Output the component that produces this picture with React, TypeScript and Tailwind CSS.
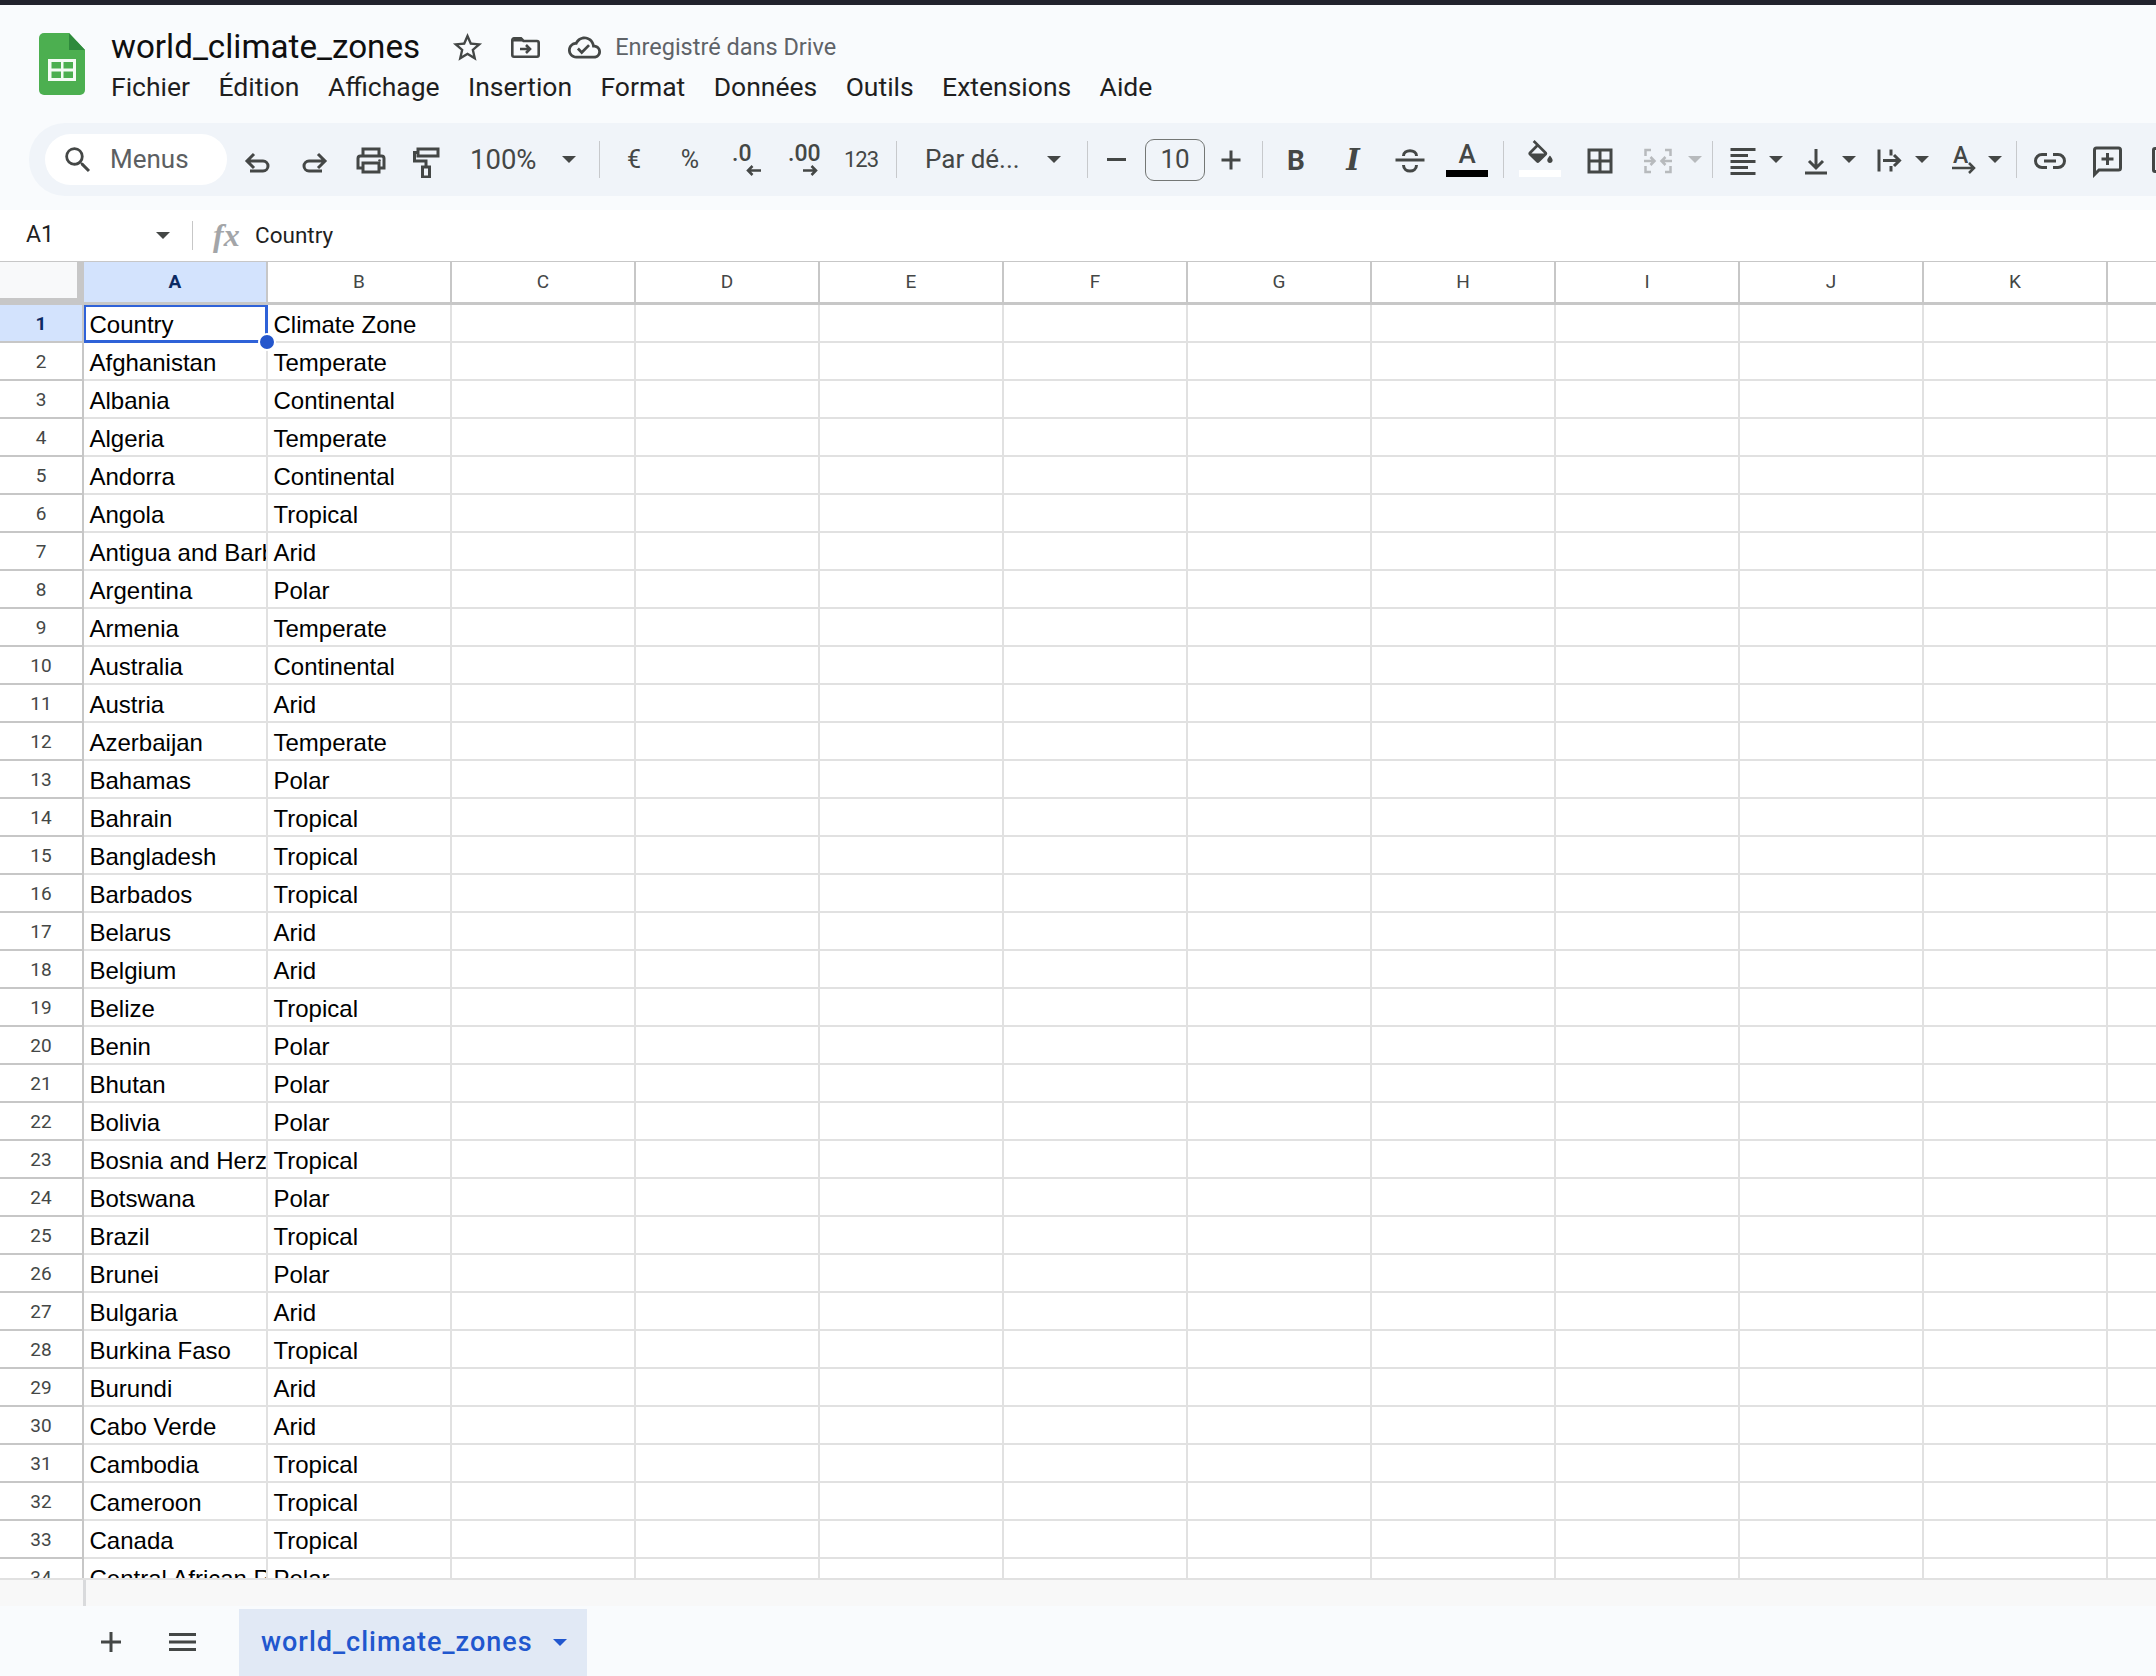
import type { ReactNode } from "react";

const MENU = ["Fichier", "Édition", "Affichage", "Insertion", "Format", "Données", "Outils", "Extensions", "Aide"];
const COLUMNS = ["A", "B", "C", "D", "E", "F", "G", "H", "I", "J", "K", ""];

const ROWS: [string, string][] = [
  ["Country", "Climate Zone"],
  ["Afghanistan", "Temperate"],
  ["Albania", "Continental"],
  ["Algeria", "Temperate"],
  ["Andorra", "Continental"],
  ["Angola", "Tropical"],
  ["Antigua and Barbuda", "Arid"],
  ["Argentina", "Polar"],
  ["Armenia", "Temperate"],
  ["Australia", "Continental"],
  ["Austria", "Arid"],
  ["Azerbaijan", "Temperate"],
  ["Bahamas", "Polar"],
  ["Bahrain", "Tropical"],
  ["Bangladesh", "Tropical"],
  ["Barbados", "Tropical"],
  ["Belarus", "Arid"],
  ["Belgium", "Arid"],
  ["Belize", "Tropical"],
  ["Benin", "Polar"],
  ["Bhutan", "Polar"],
  ["Bolivia", "Polar"],
  ["Bosnia and Herzegovina", "Tropical"],
  ["Botswana", "Polar"],
  ["Brazil", "Tropical"],
  ["Brunei", "Polar"],
  ["Bulgaria", "Arid"],
  ["Burkina Faso", "Tropical"],
  ["Burundi", "Arid"],
  ["Cabo Verde", "Arid"],
  ["Cambodia", "Tropical"],
  ["Cameroon", "Tropical"],
  ["Canada", "Tropical"],
  ["Central African Republic", "Polar"],
];

// 36x36 box drawn in screen pixels, so the strokes line up with the toolbar
function Stroke({ children, color = "#444746", width = 3 }: { children: ReactNode; color?: string; width?: number }) {
  return (
    <svg viewBox="0 0 36 36" className="h-9 w-9 shrink-0" fill="none" stroke={color} strokeWidth={width}>
      {children}
    </svg>
  );
}

function Caret({ color = "#444746" }: { color?: string }) {
  return (
    <svg viewBox="0 0 14 7" className="h-[7px] w-[14px] shrink-0">
      <path d="M0 0h14L7 7z" fill={color} />
    </svg>
  );
}

function Sep({ className = "mx-[6px]" }: { className?: string }) {
  return <div className={`h-[37px] w-px shrink-0 bg-[#c7c9cc] ${className}`} />;
}

function Tool({ className, children }: { className: string; children: ReactNode }) {
  return <div className={`flex h-[50px] shrink-0 items-center justify-center ${className}`}>{children}</div>;
}

function Logo() {
  return (
    <svg viewBox="0 0 46 62" className="h-[62px] w-[46px] shrink-0">
      <path d="M5 0h25l16 17v40a5 5 0 0 1-5 5H5a5 5 0 0 1-5-5V5a5 5 0 0 1 5-5z" fill="#4caf50" />
      <path d="M30 0l16 17H30z" fill="#2f8a3c" />
      <path d="M9 26h28v22H9z" fill="#f4fbf4" />
      <path d="M12.5 29h9.5v6.5h-9.5zM24.5 29h9.5v6.5h-9.5zM12.5 38.500h9.500v6.500h-9.500zM24.500 38.500h9.500v6.500h-9.500z" fill="#4caf50" />
    </svg>
  );
}

function Toolbar() {
  return (
    <div className="ml-[29px] mt-[18px] flex h-[73px] items-center overflow-hidden rounded-l-[36px] bg-[#f0f4f9] pl-4 text-[#444746]">
      <div className="flex h-[51px] w-[182px] shrink-0 items-center rounded-full bg-white pl-4">
        <svg viewBox="0 0 24 24" className="h-[34px] w-[34px] shrink-0" fill="#444746">
          <path d="M15.5 14h-.79l-.28-.27A6.471 6.471 0 0 0 16 9.500 6.500 6.500 0 1 0 9.500 16c1.610 0 3.090-.590 4.230-1.570l.270.280v.790l5 4.990L20.490 19l-4.990-5zm-6 0C7.010 14 5 11.990 5 9.500S7.010 5 9.500 5 14 7.010 14 9.500 11.990 14 9.500 14z" />
        </svg>
        <span className="ml-[15px] text-[26px] text-[#5c5f62]">Menus</span>
      </div>

      <Tool className="ml-[3px] w-14">
        <Stroke><path d="M14 12l-7 7 7 7M7 19h16a5 5 0 0 1 0 10H10" /></Stroke>
      </Tool>
      <Tool className="w-14">
        <Stroke><path d="M22 12l7 7-7 7M29 19H13a5 5 0 0 0 0 10h13" /></Stroke>
      </Tool>
      <Tool className="w-14">
        <Stroke>
          <path d="M11 14V7h16v7M11 26H6V16.500a2.500 2.500 0 0 1 2.500-2.500h21a2.500 2.500 0 0 1 2.500 2.500V26h-5M11 21h16v9H11z" />
          <circle cx="27.500" cy="18.500" r="1.300" fill="#444746" stroke="none" />
        </Stroke>
      </Tool>
      <Tool className="w-14">
        <Stroke><path d="M10 7h20v7H10zM10 10.500H6.500V19H18v6M14.500 25h7v10h-7z" /></Stroke>
      </Tool>

      <div className="flex h-[50px] w-[139px] shrink-0 items-center justify-between pl-4 pr-[17px]">
        <span className="text-[27.500px]">100%</span>
        <Caret />
      </div>
      <Sep />

      <Tool className="w-14"><span className="text-[25px]">€</span></Tool>
      <Tool className="w-14"><span className="text-[25px]">%</span></Tool>
      <div className="flex h-[50px] w-[57px] shrink-0 flex-col justify-center pl-[14px]">
        <span className="text-[23px] font-medium leading-[20px]">.0</span>
        <svg viewBox="0 0 15 11" className="ml-[14px] mt-[1px] h-[11px] w-[15px]" fill="none" stroke="#444746" strokeWidth="2.500">
          <path d="M15 5.500H2M6.500 1L2 5.500 6.500 10" />
        </svg>
      </div>
      <div className="flex h-[50px] w-[57px] shrink-0 flex-col justify-center pl-[13px]">
        <span className="text-[23px] font-medium leading-[20px]">.00</span>
        <svg viewBox="0 0 15 11" className="ml-[15px] mt-[1px] h-[11px] w-[15px]" fill="none" stroke="#444746" strokeWidth="2.500">
          <path d="M0 5.500h13M8.500 1L13 5.500 8.500 10" />
        </svg>
      </div>
      <Tool className="w-[58px]"><span className="text-[22px] tracking-[-1px]">123</span></Tool>
      <Sep />

      <div className="flex h-[50px] w-[178px] shrink-0 items-center justify-between pl-[22px] pr-[20px]">
        <span className="text-[26px]">Par dé...</span>
        <Caret />
      </div>
      <Sep />

      <Tool className="w-11"><div className="h-[3px] w-[19px] bg-[#444746]" /></Tool>
      <div className="ml-[7px] flex h-[42px] w-[60px] shrink-0 items-center justify-center rounded-[9px] border-[1.5px] border-[#747775] text-[26px]">10</div>
      <Tool className="ml-px w-[50px]">
        <Stroke><path d="M18 8.500v19M8.500 18h19" /></Stroke>
      </Tool>
      <Sep />

      <Tool className="w-[54px] pt-[2px]"><span className="text-[28px] font-bold">B</span></Tool>
      <Tool className="w-[60px] pt-[2px]"><span className="font-['DejaVu_Serif',serif] text-[29px] font-bold italic">I</span></Tool>
      <Tool className="w-[53px]">
        <Stroke><path d="M3.500 18h29M11.500 14c0-7 13-7 13 0M11.500 23c0 8 13 8 13 0" /></Stroke>
      </Tool>
      <div className="mb-[2px] flex h-[37px] w-[62px] shrink-0 flex-col items-center justify-end">
        <span className="text-[26px] font-medium leading-[24px]">A</span>
        <div className="mt-[4px] h-[7px] w-[42px] bg-black" />
      </div>
      <Sep className="ml-[5px] mr-[6px]" />

      <div className="mb-[2px] flex h-[37px] w-[60px] shrink-0 flex-col items-center justify-end">
        <svg viewBox="0 0 24 20" className="h-[27px] w-[33px]" fill="#444746">
          <path d="M16.560 8.940L7.620 0 6.210 1.410l2.380 2.380-5.150 5.150c-.590.590-.590 1.540 0 2.120l5.500 5.500c.290.290.680.440 1.060.440s.770-.150 1.060-.440l5.500-5.500c.590-.580.590-1.530 0-2.120zM5.210 10L10 5.210 14.790 10H5.210zM19 11.500s-2 2.170-2 3.500c0 1.100.9 2 2 2s2-.9 2-2c0-1.330-2-3.500-2-3.500z" />
        </svg>
        <div className="mt-[3px] h-[7px] w-[42px] bg-white" />
      </div>
      <Tool className="w-[59px]">
        <Stroke><path d="M7 8h22v22H7zM18 8v22M7 19h22" /></Stroke>
      </Tool>
      <Tool className="w-[58px]">
        <Stroke color="#b7babd" width={2.500}>
          <path d="M11 8H5.500v6M25 8h5.500v6M11 30H5.500v-6M25 30h5.500v-6M4 19h10M10.500 15l4 4-4 4M32 19H22M25.500 15l-4 4 4 4" />
        </Stroke>
      </Tool>
      <Tool className="w-4"><Caret color="#b7babd" /></Tool>
      <Sep className="ml-[9px] mr-[6px]" />

      <Tool className="w-12">
        <Stroke><path d="M5.500 7.500h25M5.500 13.500H23M5.500 19.500h25M5.500 25.500H23M5.500 31.500h25" /></Stroke>
      </Tool>
      <Tool className="w-[18px]"><Caret /></Tool>
      <Tool className="w-14 pl-[6px]">
        <Stroke><path d="M18 7v19M11 19l7 7 7-7M7 31h22" /></Stroke>
      </Tool>
      <Tool className="w-4"><Caret /></Tool>
      <Tool className="w-[57px] pl-[7px]">
        <Stroke><path d="M8 7.500v22M20 7.500v6M20 24v5.500M12 18.500h16M23 13l5.500 5.500L23 24" /></Stroke>
      </Tool>
      <Tool className="w-4"><Caret /></Tool>
      <div className="flex h-[37px] w-[57px] shrink-0 flex-col items-start pl-[22px]">
        <span className="ml-[1px] mt-[5px] text-[23px] font-medium leading-[20px]">A</span>
        <svg viewBox="0 0 24 12" className="-mt-[4px] h-3 w-6" fill="none" stroke="#444746" strokeWidth="2.500">
          <path d="M0 6h22M17 1l5 5-5 5" />
        </svg>
      </div>
      <Tool className="w-4"><Caret /></Tool>
      <Sep className="ml-[13px] mr-[6px]" />

      <Tool className="w-[54px]">
        <Stroke><path d="M15 12.500H10a6.500 6.500 0 0 0 0 13h5M21 12.500h5a6.500 6.500 0 0 1 0 13h-5M12 19h12" /></Stroke>
      </Tool>
      <Tool className="w-[60px]">
        <Stroke>
          <path d="M7.500 6h22a2 2 0 0 1 2 2v18a2 2 0 0 1-2 2H10l-4.500 4.500V8a2 2 0 0 1 2-2zM18.500 11v12M12.500 17h12" />
        </Stroke>
      </Tool>
      <div className="ml-[15px] h-[26px] w-[30px] shrink-0 rounded-[3px] border-[3px] border-[#444746]" />
    </div>
  );
}

function Header() {
  return (
    <header className="h-[205px] shrink-0 bg-[#f9fbfd]">
      <div className="flex pl-[39px] pt-[28px]">
        <Logo />
        <div className="ml-[26px] flex flex-col">
          <div className="-mt-[6px] flex h-[40px] items-center">
            <span className="text-[33.200px] leading-none text-[#0f0f0f]">world_climate_zones</span>
            <svg viewBox="0 0 24 24" className="ml-[30px] h-[35px] w-[35px]" fill="#444746">
              <path d="M22 9.240l-7.190-.620L12 2 9.190 8.630 2 9.240l5.460 4.730L5.820 21 12 17.270 18.180 21l-1.630-7.030L22 9.240zM12 15.400l-3.760 2.270 1-4.280-3.320-2.880 4.380-.380L12 6.100l1.710 4.040 4.380.380-3.320 2.880 1 4.280L12 15.400z" />
            </svg>
            <svg viewBox="0 0 29 21" className="ml-[26px] h-[21px] w-[29px]" fill="none" stroke="#444746" strokeWidth="2.600">
              <path d="M1.300 3a1.700 1.700 0 0 1 1.700-1.700h7l2.500 2.700h13.500a1.700 1.700 0 0 1 1.700 1.700V18a1.700 1.700 0 0 1-1.700 1.700H3A1.700 1.700 0 0 1 1.300 18z" />
              <path d="M1.300 4.500h10V1.300h-8z" fill="#444746" stroke="none" />
              <path d="M9 12h10M15 8l4 4-4 4" />
            </svg>
            <svg viewBox="0 0 24 24" className="ml-[28px] h-[33px] w-[33px]" fill="#444746">
              <path d="M19.350 10.040C18.670 6.590 15.640 4 12 4 9.110 4 6.600 5.640 5.350 8.040 2.340 8.360 0 10.910 0 14c0 3.310 2.690 6 6 6h13c2.760 0 5-2.240 5-5 0-2.640-2.050-4.780-4.650-4.960zM19 18H6c-2.210 0-4-1.790-4-4 0-2.050 1.530-3.760 3.560-3.970l1.070-.110.500-.950C8.080 7.140 9.940 6 12 6c2.620 0 4.880 1.860 5.390 4.430l.300 1.500 1.530.110c1.560.100 2.780 1.410 2.780 2.960 0 1.650-1.350 3-3 3zm-9-3.820l-2.090-2.090L6.500 13.500 10 17l6.010-6.010-1.410-1.410z" />
            </svg>
            <span className="ml-[14px] pt-[1px] text-[23.500px] text-[#5f6368]">Enregistré dans Drive</span>
          </div>
          <nav className="mt-[2px] flex gap-[28.400px] text-[26.500px] leading-[36px] text-[#1f1f1f]">
            {MENU.map((item) => (
              <span key={item}>{item}</span>
            ))}
          </nav>
        </div>
      </div>
      <Toolbar />
    </header>
  );
}

function FormulaBar() {
  return (
    <div className="flex h-[52px] shrink-0 items-center border-b-[1.5px] border-[#c7c7c7] bg-white">
      <div className="flex w-[192px] shrink-0 items-center justify-between pl-[26px] pr-[22px]">
        <span className="text-[23px] text-[#1f1f1f]">A1</span>
        <Caret />
      </div>
      <div className="h-[29px] w-px shrink-0 bg-[#c7c7c7]" />
      <span className="-mt-[2px] ml-[20px] w-[42px] shrink-0 font-['Liberation_Serif',serif] text-[32px] font-bold italic leading-none text-[#a3a5a8]">fx</span>
      <span className="text-[22.500px] text-[#1f1f1f]">Country</span>
    </div>
  );
}

function Grid() {
  return (
    <div className="relative min-h-0 flex-1 overflow-hidden bg-white">
      <div className="flex h-[43px] border-b-[3px] border-[#c7c7c7] text-[19px] text-[#444746]">
        <div className="w-[84px] shrink-0 border-b-4 border-r-[7px] border-[#c7c7c7] bg-[#f8f9fa]" />
        {COLUMNS.map((col, i) => (
          <div
            key={col || "blank"}
            className={`flex w-[184px] shrink-0 items-center justify-center border-r-2 border-[#c7c7c7] ${
              i === 0 ? "bg-[#d3e3fd] font-bold text-[#0b2a63]" : ""
            }`}
          >
            {col}
          </div>
        ))}
      </div>

      {ROWS.map(([country, zone], i) => (
        <div key={country} className="flex h-[38px]">
          <div
            className={`flex w-[84px] shrink-0 items-center justify-center border-b-2 border-r-2 border-[#c7c7c7] pt-[2px] text-[19px] ${
              i === 0 ? "bg-[#d3e3fd] font-bold text-[#0b2a63]" : "text-[#444746]"
            }`}
          >
            {i + 1}
          </div>
          {COLUMNS.map((col, c) => (
            <div
              key={col || "blank"}
              className="w-[184px] shrink-0 overflow-hidden whitespace-nowrap border-b-2 border-r-2 border-[#e1e1e1] pl-[5.500px] font-['Liberation_Sans',Arial,sans-serif] text-[24px] leading-[39px] text-black"
            >
              {c === 0 ? country : c === 1 ? zone : ""}
            </div>
          ))}
        </div>
      ))}

      <div className="absolute left-[84px] top-[43px] h-[38px] w-[184px] border-2 border-b-[3px] border-r-[3px] border-[#2f62d8]" />
      <div className="absolute left-[258px] top-[71px] h-[18px] w-[18px] rounded-full border-2 border-white bg-[#2456cc]" />
    </div>
  );
}

function SheetBar() {
  return (
    <>
      <div className="flex h-[28px] shrink-0 border-t-2 border-[#e1e1e1] bg-[#f8f8f8]">
        <div className="w-[86px] border-r-[3px] border-[#d9dadc]" />
      </div>
      <div className="flex h-[70px] shrink-0 items-start bg-[#f9fbfd] pl-[101px]">
        <svg viewBox="0 0 20 20" className="mt-[26px] h-5 w-5 shrink-0" fill="none" stroke="#444746" strokeWidth="3">
          <path d="M10 0v20M0 10h20" />
        </svg>
        <svg viewBox="0 0 27 18" className="ml-[48px] mt-[27px] h-[18px] w-[27px] shrink-0" fill="none" stroke="#444746" strokeWidth="3">
          <path d="M0 1.500h27M0 9h27M0 16.500h27" />
        </svg>
        <div className="ml-[43px] mt-[3px] flex h-[67px] w-[348px] shrink-0 items-center bg-[#e1e9f5] pl-[22px]">
          <span className="text-[27px] font-medium tracking-[1px] text-[#2157ce]">world_climate_zones</span>
          <div className="ml-[20px]">
            <Caret color="#2157ce" />
          </div>
        </div>
      </div>
    </>
  );
}

export default function App() {
  return (
    <div className="flex h-[1676px] w-[2156px] flex-col overflow-hidden bg-white font-['Roboto',sans-serif]">
      <div className="h-[5px] shrink-0 bg-[#22232d]" />
      <Header />
      <FormulaBar />
      <Grid />
      <SheetBar />
    </div>
  );
}
